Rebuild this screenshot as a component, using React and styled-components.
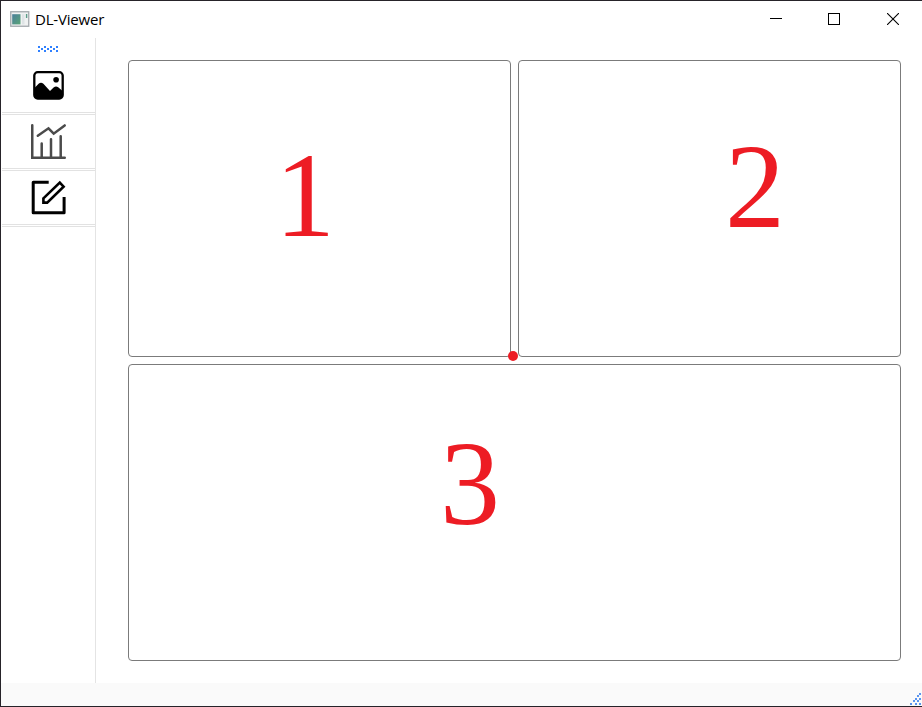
import React from "react";
import styled, { createGlobalStyle } from "styled-components";

const GlobalStyle = createGlobalStyle`
  * { box-sizing: border-box; }
  body { margin: 0; background: #fff; overflow: hidden; }
`;

const Window = styled.div`
  position: relative;
  display: flex;
  flex-direction: column;
  width: 922px;
  height: 707px;
  background: #fff;
  border: solid #262329;
  border-width: 1px 0 1px 1px;
`;

const TitleBar = styled.header`
  display: flex;
  align-items: center;
  flex: 0 0 37px;
  padding: 0 0 1px 9px;
`;

const Title = styled.h1`
  flex: 1;
  margin: 0 0 1px 5px;
  font: 400 15px/20px "Open Sans", "Noto Sans", sans-serif;
  letter-spacing: -0.2px;
  color: #000;
`;

const Controls = styled.div`
  display: flex;
`;

const ControlButton = styled.button`
  display: flex;
  align-items: center;
  justify-content: center;
  width: ${(p) => p.$width}px;
  height: 36px;
  padding: 0;
  border: 0;
  background: transparent;
`;

const Body = styled.div`
  display: flex;
  flex: 1;
  min-height: 0;
`;

const Sidebar = styled.nav`
  display: flex;
  flex-direction: column;
  width: 95px;
  padding-left: 1px;
  border-right: 1px solid #e4e4e4;
`;

const Handle = styled.div`
  height: 20px;
  padding: 8px 0 0 36px;
  line-height: 0;
`;

const ToolButton = styled.button`
  display: flex;
  align-items: center;
  justify-content: center;
  height: ${(p) => p.$height}px;
  padding: 0;
  border: 0;
  border-bottom: 3px double #e2e2e2;
  background: transparent;
`;

const Workspace = styled.main`
  display: grid;
  grid-template-columns: 383px 383px;
  grid-template-rows: 297px 297px;
  gap: 7px;
  padding: 22px 0 0 32px;
`;

const Panel = styled.section`
  grid-column: span ${(p) => p.$span || 1};
  padding: ${(p) => p.$top}px 0 0 ${(p) => p.$left}px;
  border: 1px solid #7b7b7b;
  border-radius: 4px;
  font: 120px/120px "Liberation Serif", "Times New Roman", serif;
  color: #ed1c24;
`;

const Marker = styled.span`
  position: absolute;
  left: 507px;
  top: 350px;
  width: 10px;
  height: 10px;
  border-radius: 50%;
  background: #ed1c24;
`;

const StatusBar = styled.footer`
  display: flex;
  flex: 0 0 23px;
  align-items: flex-end;
  justify-content: flex-end;
  padding: 0 1px 1px 0;
  background: #fafafa;
`;

function Dots({ points, width, height, color }) {
  return (
    <svg width={width} height={height} fill={color} shapeRendering="crispEdges">
      {points.map(([x, y]) => (
        <rect key={`${x}-${y}`} x={x} y={y} width="2" height="2" />
      ))}
    </svg>
  );
}

const HANDLE_DOTS = [
  ...[0, 6, 12, 18].flatMap((x) => [[x, 0], [x, 4]]),
  ...[3, 9, 15].map((x) => [x, 2]),
];

const GRIP_DOTS = [
  [9, 0],
  [7, 2],
  [5, 5], [9, 5],
  [3, 7], [7, 7],
  [0, 10], [5, 10], [9, 10],
];

function AppIcon() {
  return (
    <svg width="20" height="16" viewBox="0 0 20 16">
      <defs>
        <linearGradient id="screen" x1="0" y1="0" x2="1" y2="1">
          <stop offset="0" stopColor="#4b7f9b" />
          <stop offset="1" stopColor="#5aa577" />
        </linearGradient>
      </defs>
      <rect x="0.75" y="0.75" width="18" height="14.5" fill="#f0f2f2" stroke="#a3a9ad" strokeWidth="1.3" />
      <rect x="2.2" y="3.2" width="8.3" height="10.2" fill="url(#screen)" />
      <path d="M12 3.2h2.5v10.2H12z" fill="#dfe4e6" />
      <path d="M16.6 3v4" stroke="#5b9c88" strokeWidth="1.4" />
    </svg>
  );
}

function PictureIcon() {
  return (
    <svg width="31" height="29" viewBox="0 0 31 29">
      <rect x="1.3" y="1.2" width="28.4" height="26.3" rx="3.4" fill="#fff" stroke="#000" strokeWidth="2.3" />
      <circle cx="23.1" cy="8.8" r="2.8" />
      <path d="M1 17.5 5.6 12.7Q8 10.7 10.4 12.7L17 20l3.6-3.5Q23 14.4 25.2 16.3L29.6 20v4a3.6 3.6 0 0 1-3.6 3.5H4.6A3.6 3.6 0 0 1 1 24z" />
    </svg>
  );
}

function ChartIcon() {
  return (
    <svg width="37" height="37" viewBox="0 0 37 37" fill="none" stroke="#4b4b4b" strokeWidth="2.5" strokeLinecap="round">
      <path d="M2.25 2.25v32.5H34.75M11.7 20.5v14M21 16.2v18M30.7 13.2v21" />
      <path d="M7.8 12.8 18.5 5.3l5.2 5.4L34.7 2.4" />
    </svg>
  );
}

function EditIcon() {
  return (
    <svg width="37" height="37" viewBox="0 0 37 37" fill="none" stroke="#000" strokeWidth="3">
      <path d="M17.2 3.2H3.2V33.8H34.1V19.4" strokeLinecap="square" strokeLinejoin="round" />
      <path d="M13.4 19.4 29.8 3.6l3.8 4L17.2 23.6H13.4z" strokeWidth="2.6" />
    </svg>
  );
}

export default function App() {
  return (
    <>
      <GlobalStyle />
      <Window>
        <TitleBar>
          <AppIcon />
          <Title>DL-Viewer</Title>
          <Controls>
            <ControlButton $width={58} aria-label="Minimize">
              <svg width="12" height="12"><path d="M0 5.5h12" stroke="#000" /></svg>
            </ControlButton>
            <ControlButton $width={58} aria-label="Maximize">
              <svg width="12" height="12"><rect x=".5" y=".5" width="11" height="11" fill="none" stroke="#000" /></svg>
            </ControlButton>
            <ControlButton $width={59} aria-label="Close">
              <svg width="12" height="12"><path d="m0 0 12 12M12 0 0 12" stroke="#000" strokeWidth="1.1" /></svg>
            </ControlButton>
          </Controls>
        </TitleBar>
        <Body>
          <Sidebar>
            <Handle><Dots points={HANDLE_DOTS} width={20} height={6} color="#2f80ff" /></Handle>
            <ToolButton $height={57} aria-label="Image"><PictureIcon /></ToolButton>
            <ToolButton $height={56} aria-label="Chart"><ChartIcon /></ToolButton>
            <ToolButton $height={56} aria-label="Edit"><EditIcon /></ToolButton>
          </Sidebar>
          <Workspace>
            <Panel $left={146} $top={75}>1</Panel>
            <Panel $left={206} $top={66}>2</Panel>
            <Panel $span={2} $left={311} $top={59}>3</Panel>
          </Workspace>
        </Body>
        <StatusBar><Dots points={GRIP_DOTS} width={11} height={12} color="#5b95f0" /></StatusBar>
        <Marker />
      </Window>
    </>
  );
}
